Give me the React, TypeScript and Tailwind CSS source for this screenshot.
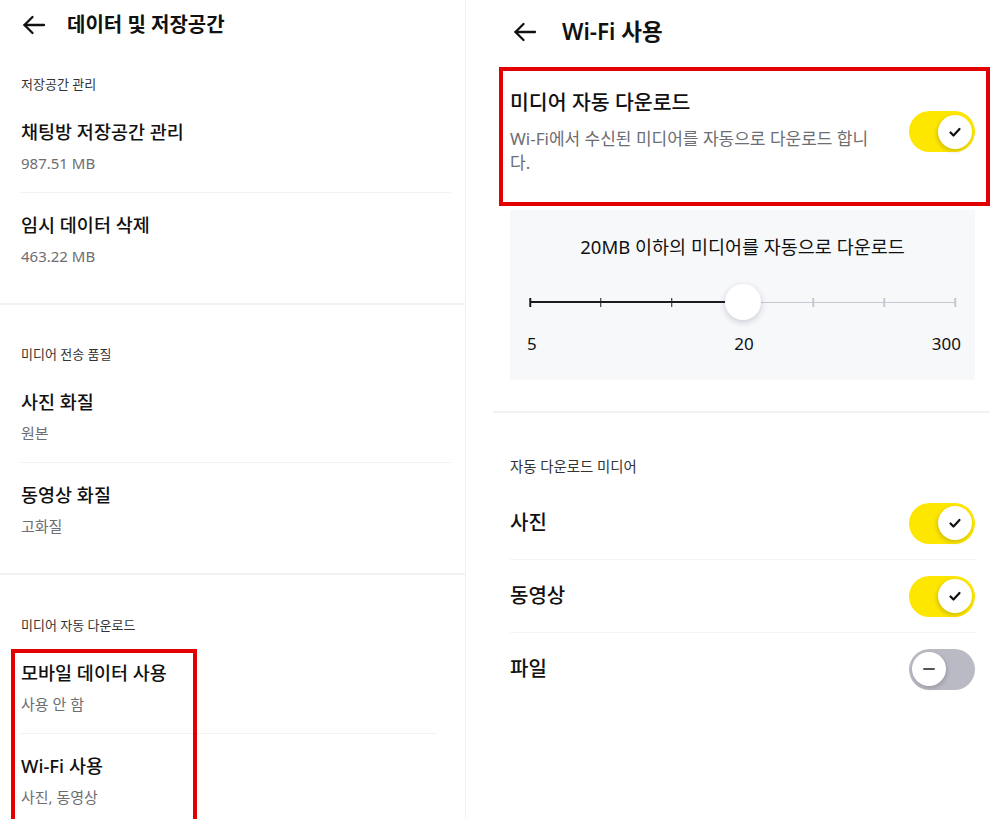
import React from "react";

// Two settings screens side by side: "데이터 및 저장공간" and "Wi-Fi 사용".

function BackArrow() {
  return (
    <svg width="24" height="24" viewBox="0 0 24 24" fill="none" stroke="#111" strokeWidth="2.3" strokeLinecap="round" strokeLinejoin="round">
      <path d="M22 12H2.5" />
      <path d="M10.5 4L2.5 12l8 8" />
    </svg>
  );
}

function Toggle({ on }: { on: boolean }) {
  if (on) {
    return (
      <div className="w-[66px] h-[41px] rounded-full bg-[#fde600] flex items-center justify-end pr-[3px] shrink-0">
        <div className="w-[34px] h-[34px] rounded-full bg-white shadow-[-1px_2px_4px_rgba(0,0,0,0.18)] flex items-center justify-center">
          <svg width="14" height="14" viewBox="0 0 14 14" fill="none" stroke="#111" strokeWidth="2.2" strokeLinecap="round" strokeLinejoin="round">
            <path d="M2.5 7.5l3 3L11.5 4" />
          </svg>
        </div>
      </div>
    );
  }
  return (
    <div className="w-[66px] h-[41px] rounded-full bg-[#b9bac4] flex items-center justify-start pl-[3px] shrink-0">
      <div className="w-[34px] h-[34px] rounded-full bg-white shadow-[1px_2px_4px_rgba(0,0,0,0.18)] flex items-center justify-center">
        <div className="w-[12px] h-[2px] rounded bg-[#555]" />
      </div>
    </div>
  );
}

function Item({ title, sub }: { title: string; sub: string }) {
  return (
    <div className="py-[18px] pl-[21px]">
      <div className="text-[18.5px] leading-[28px] font-medium text-[#111]">{title}</div>
      <div className="mt-[6px] text-[15px] leading-[22px] text-[#6d6d72]">{sub}</div>
    </div>
  );
}

function ItemDivider() {
  return <div className="h-px ml-[20px] mr-[14px] bg-[#f2f2f4]" />;
}

function SectionLabel({ children }: { children: React.ReactNode }) {
  return <div className="pl-[21px] text-[13px] leading-[20px] text-[#333] mb-[6px]">{children}</div>;
}

function LeftPanel() {
  return (
    <div className="w-[466px] shrink-0 border-r border-[#f1f2f5] h-full">
      <div className="h-[50px] flex items-center pl-[22px]">
        <BackArrow />
        <div className="ml-[21px] text-[20px] font-semibold text-[#111] leading-none">데이터 및 저장공간</div>
      </div>

      <div className="pt-[24px] pb-[18px]">
        <SectionLabel>저장공간 관리</SectionLabel>
        <Item title="채팅방 저장공간 관리" sub="987.51 MB" />
        <ItemDivider />
        <Item title="임시 데이터 삭제" sub="463.22 MB" />
      </div>
      <div className="h-[2px] bg-[#f1f2f5]" />

      <div className="pt-[39px] pb-[18px]">
        <SectionLabel>미디어 전송 품질</SectionLabel>
        <Item title="사진 화질" sub="원본" />
        <ItemDivider />
        <Item title="동영상 화질" sub="고화질" />
      </div>
      <div className="h-[2px] bg-[#f1f2f5]" />

      <div className="pt-[40px]">
        <SectionLabel>미디어 자동 다운로드</SectionLabel>
        <Item title="모바일 데이터 사용" sub="사용 안 함" />
        <div className="h-px ml-[20px] mr-[28px] bg-[#f2f2f4]" />
        <Item title="Wi-Fi 사용" sub="사진, 동영상" />
      </div>
    </div>
  );
}

function SizeSlider() {
  const ticks = ["left-[0%]", "left-[16.667%]", "left-[33.333%]", "left-[66.667%]", "left-[83.333%]", "left-[100%]"];
  return (
    <div className="mx-[20px] mt-[23px] relative h-[40px]">
      <div className="absolute left-0 w-1/2 top-[19px] h-[2px] bg-[#1c1c1e]" />
      <div className="absolute left-1/2 right-0 top-[19.5px] h-[1.5px] bg-[#c6c7d0]" />
      {ticks.map((t, i) => (
        <div
          key={t}
          className={`absolute top-[15.5px] w-[1.5px] h-[9px] -translate-x-1/2 ${t} ${i < 3 ? "bg-[#1c1c1e]" : "bg-[#c6c7d0]"}`}
        />
      ))}
      <div className="absolute left-1/2 top-[2px] -translate-x-1/2 w-[36px] h-[36px] rounded-full bg-white shadow-[0_2px_6px_rgba(40,40,80,0.22)]" />
    </div>
  );
}

function MediaRow({ label, on }: { label: string; on: boolean }) {
  return (
    <div className="h-[72px] flex items-center justify-between">
      <div className="text-[20px] font-medium text-[#111]">{label}</div>
      <Toggle on={on} />
    </div>
  );
}

function RightPanel() {
  return (
    <div className="flex-1 ml-[27px] h-full">
      <div className="h-[64px] flex items-center pl-[20px]">
        <BackArrow />
        <div className="ml-[25px] text-[22.5px] font-semibold text-[#111] leading-none">Wi-Fi 사용</div>
      </div>

      <div className="pl-[17px] pr-[15px]">
        <div className="pt-[24px] flex items-start justify-between">
          <div>
            <div className="text-[20.5px] leading-[28px] font-medium text-[#111]">미디어 자동 다운로드</div>
            <div className="mt-[11px] text-[17px] leading-[24px] text-[#6d6d72]">
              Wi-Fi에서 수신된 미디어를 자동으로 다운로드 합니
              <br />
              다.
            </div>
          </div>
          <div className="mt-[23px]">
            <Toggle on />
          </div>
        </div>

        <div className="mt-[35px] bg-[#f7f8fa] pt-[25px] pb-[24px]">
          <div className="text-center text-[18.5px] leading-[24px] text-[#111]">20MB 이하의 미디어를 자동으로 다운로드</div>
          <SizeSlider />
          <div className="mt-[10px] grid grid-cols-3 pl-[17px] pr-[14px] text-[17px] leading-[24px] text-[#111]">
            <div className="text-left">5</div>
            <div className="text-center">20</div>
            <div className="text-right">300</div>
          </div>
        </div>
      </div>

      <div className="mt-[31px] h-[2px] bg-[#f1f2f5]" />

      <div className="pl-[17px] pr-[15px]">
        <div className="mt-[44px] text-[14.4px] leading-[20px] text-[#333] mb-[10px]">자동 다운로드 미디어</div>
        <MediaRow label="사진" on />
        <div className="h-px bg-[#f3f3f5]" />
        <MediaRow label="동영상" on />
        <div className="h-px bg-[#f3f3f5]" />
        <MediaRow label="파일" on={false} />
      </div>
    </div>
  );
}

export default function App() {
  return (
    <div className="relative w-[990px] h-[819px] overflow-hidden bg-white flex font-['Noto_Sans','Noto_Sans_CJK_KR',sans-serif]">
      <LeftPanel />
      <RightPanel />
      {/* red annotation boxes */}
      <div className="absolute left-[11px] top-[649px] w-[186px] h-[190px] border-[4px] border-[#e30000] pointer-events-none" />
      <div className="absolute left-[499px] top-[67px] w-[491px] h-[139px] border-[4px] border-[#e30000] pointer-events-none" />
    </div>
  );
}
